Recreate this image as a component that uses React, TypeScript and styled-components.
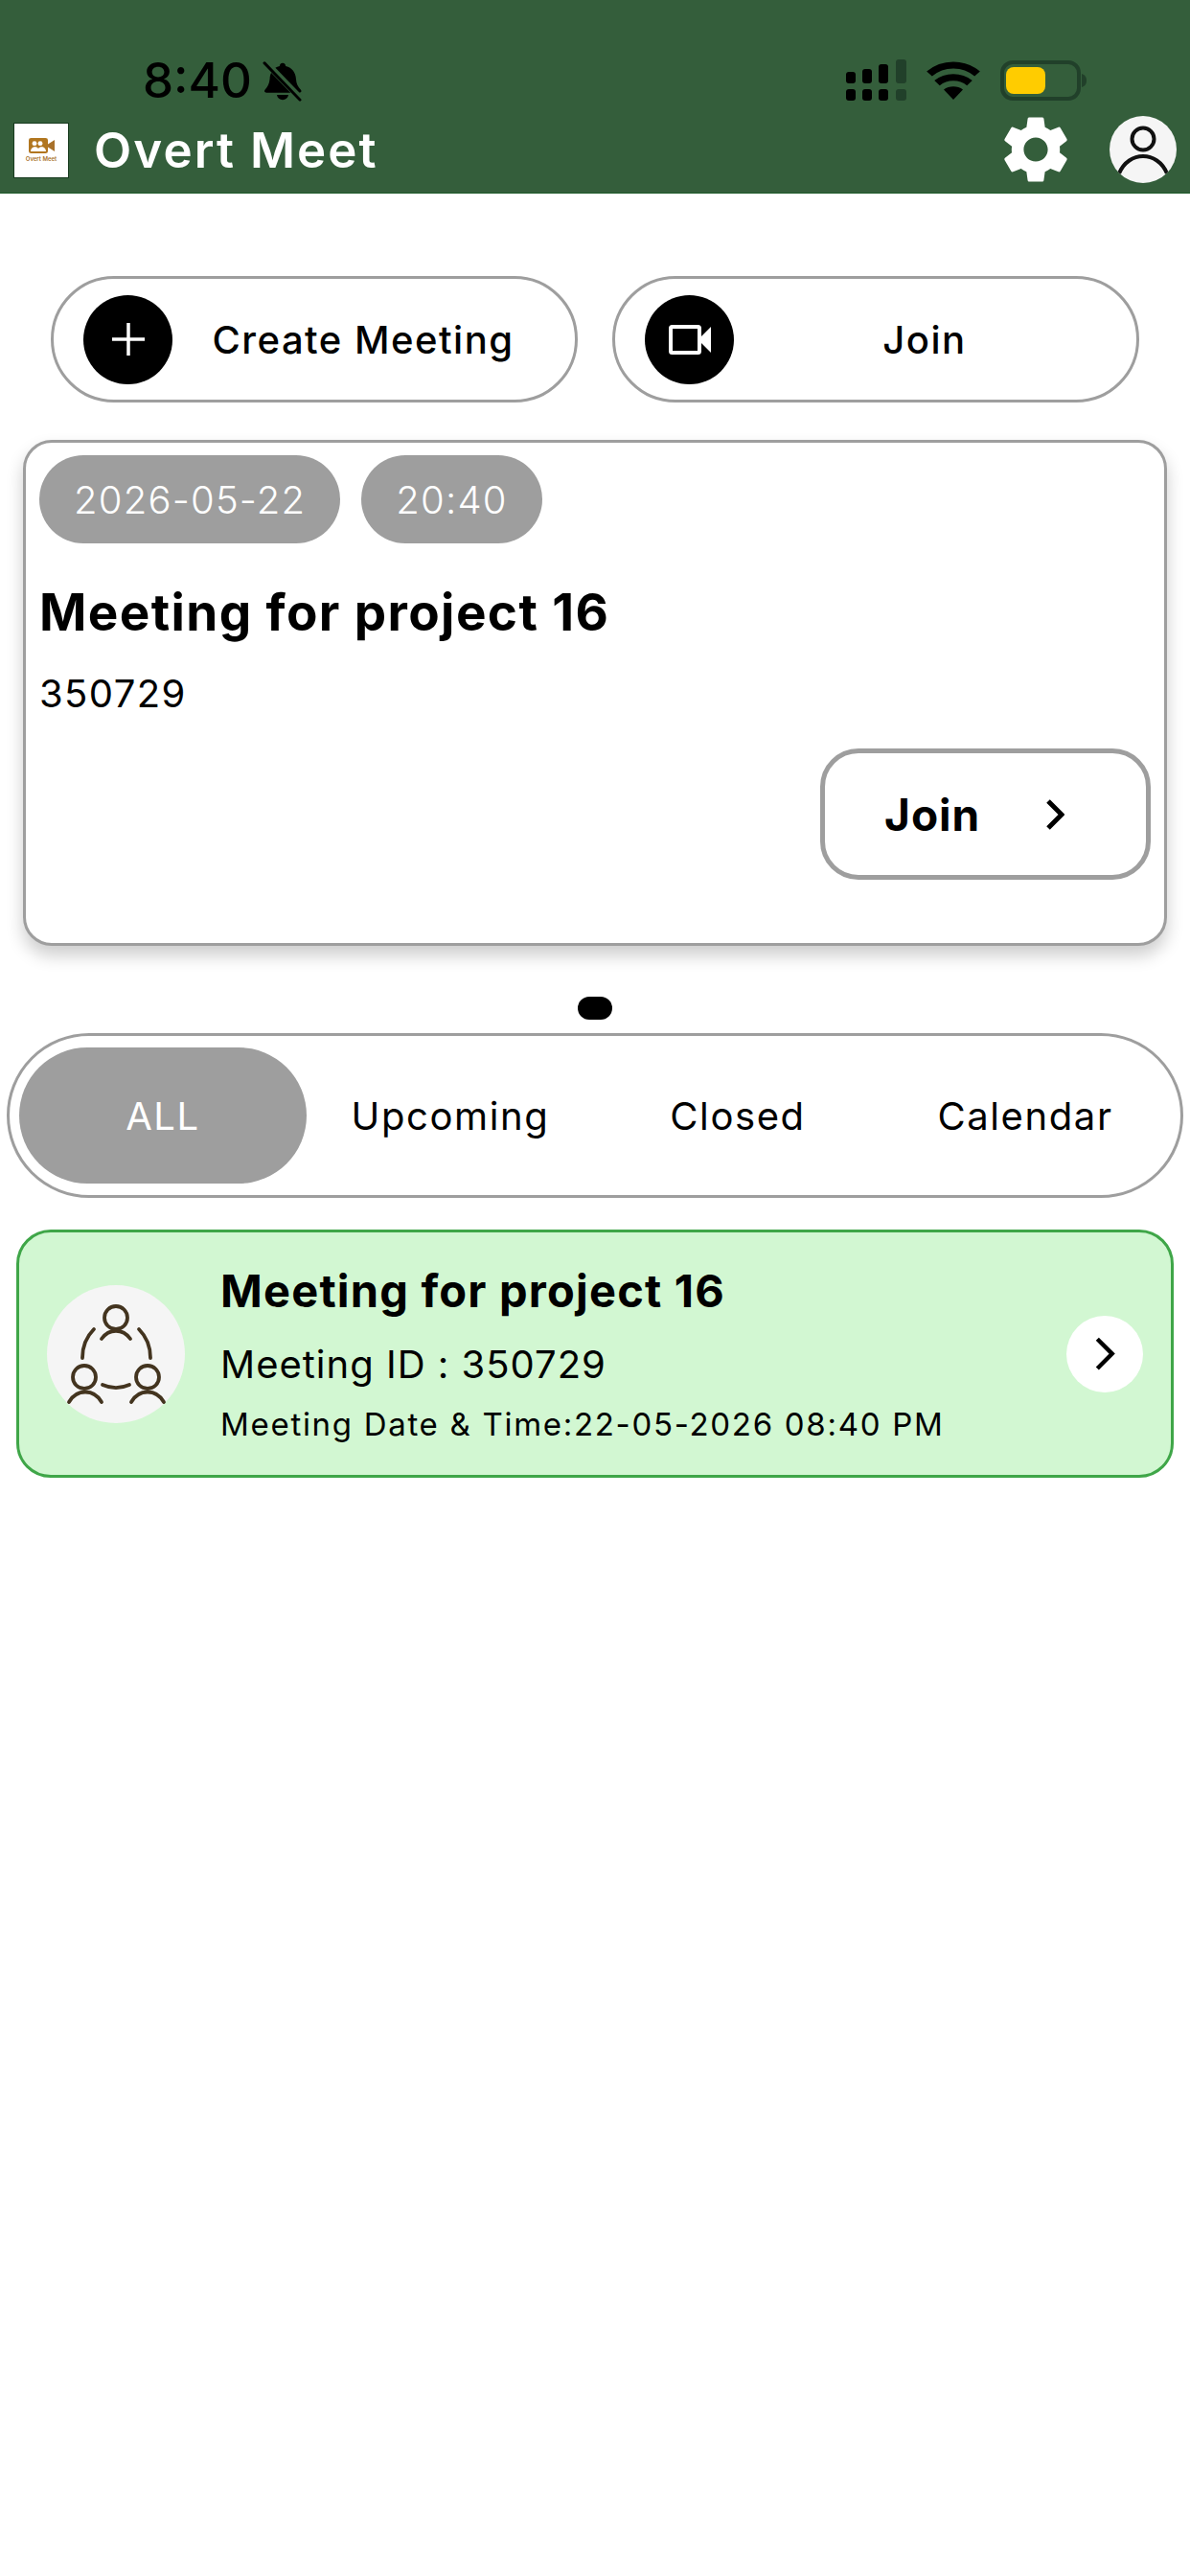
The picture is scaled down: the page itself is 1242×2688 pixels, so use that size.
import styled, { createGlobalStyle } from "styled-components";

const GlobalStyle = createGlobalStyle`
  html, body {
    margin: 0;
    padding: 0;
    background: #ffffff;
    font-family: Inter, "Liberation Sans", sans-serif;
  }
  * {
    box-sizing: border-box;
  }
`;

const Page = styled.div`
  width: 1242px;
  height: 2688px;
  background: #ffffff;
  overflow: hidden;
  display: flex;
  flex-direction: column;
`;

const Header = styled.header`
  height: 202px;
  background: #345e3b;
  border-bottom: 1px solid #1f5a2a;
  display: flex;
  flex-direction: column;
`;

const StatusBar = styled.div`
  height: 112px;
  padding: 59px 108px 0 149px;
  display: flex;
  align-items: flex-start;
  justify-content: space-between;
`;

const StatusLeft = styled.div`
  display: flex;
  align-items: center;
  gap: 11px;
`;

const Time = styled.span`
  font-size: 51px;
  line-height: 50px;
  font-weight: 500;
  color: #000000;
`;

const StatusRight = styled.div`
  display: flex;
  align-items: center;
  gap: 21px;
  margin-top: 3px;
`;

const AppBar = styled.div`
  flex: 1;
  display: flex;
  align-items: center;
  padding: 0 14px;
`;

const LogoBox = styled.div`
  width: 58px;
  height: 58px;
  margin: 0 26px 0 0;
  background: #ffffff;
  border: 1px solid #173a1e;
  display: flex;
  flex-direction: column;
  align-items: center;
  justify-content: center;
  gap: 2px;
`;

const LogoText = styled.span`
  font-size: 6px;
  line-height: 7px;
  font-weight: 600;
  color: #a8712a;
  white-space: nowrap;
`;

const AppTitle = styled.h1`
  flex: 1;
  margin: 0;
  font-size: 51px;
  line-height: 60px;
  font-weight: 600;
  letter-spacing: 2.1px;
  color: #ffffff;
`;

const BarIcons = styled.div`
  display: flex;
  align-items: center;
  gap: 41px;
  margin-bottom: 2px;
`;

const Avatar = styled.div`
  width: 70px;
  height: 70px;
  border-radius: 50%;
  background: #f5f5f5;
  overflow: hidden;
`;

const Actions = styled.div`
  display: flex;
  gap: 36px;
  padding: 86px 0 0 53px;
`;

const ActionButton = styled.button`
  width: 550px;
  height: 132px;
  padding: 0 0 0 31px;
  border: 3px solid #9e9e9e;
  border-radius: 66px;
  background: #ffffff;
  display: flex;
  align-items: center;
  font-family: inherit;
`;

const ActionCircle = styled.span`
  width: 93px;
  height: 93px;
  flex: none;
  border-radius: 50%;
  background: #000000;
  display: flex;
  align-items: center;
  justify-content: center;
`;

const ActionLabel = styled.span`
  flex: 1;
  padding-right: 22px;
  text-align: center;
  font-size: 40px;
  font-weight: 500;
  letter-spacing: 1.5px;
  color: #000000;
`;

const Card = styled.section`
  height: 528px;
  margin: 39px 24px 0;
  padding: 13px 14px 0;
  border: 3px solid #9e9e9e;
  border-radius: 30px;
  background: #ffffff;
  box-shadow: 0 10px 18px rgba(0, 0, 0, 0.2);
  display: flex;
  flex-direction: column;
`;

const ChipRow = styled.div`
  display: flex;
  gap: 22px;
`;

const Chip = styled.span`
  height: 92px;
  padding: 0 36px;
  border-radius: 46px;
  background: #9e9e9e;
  display: flex;
  align-items: center;
  font-size: 40px;
  font-weight: 300;
  letter-spacing: 1.2px;
  color: #ffffff;
`;

const CardTitle = styled.h2`
  margin: 41px 0 0;
  font-size: 53px;
  line-height: 62px;
  font-weight: 700;
  letter-spacing: 1.4px;
  color: #000000;
`;

const CardCode = styled.p`
  margin: 30px 0 0;
  font-size: 40px;
  line-height: 48px;
  letter-spacing: 1.4px;
  color: #000000;
`;

const JoinButton = styled.button`
  align-self: flex-end;
  width: 345px;
  height: 137px;
  margin: 33px 0 0;
  padding: 0 85px 0 62px;
  border: 5px solid #9e9e9e;
  border-radius: 40px;
  background: #ffffff;
  display: flex;
  align-items: center;
  justify-content: space-between;
  font-family: inherit;
  font-size: 46px;
  font-weight: 700;
  letter-spacing: 1px;
  color: #000000;
`;

const PagerDot = styled.div`
  width: 36px;
  height: 24px;
  margin: 53px auto 14px;
  border-radius: 12px;
  background: #000000;
`;

const Tabs = styled.nav`
  width: 1228px;
  height: 172px;
  margin: 0 0 0 7px;
  padding: 12px 10px;
  border: 3px solid #9e9e9e;
  border-radius: 86px;
  display: grid;
  grid-template-columns: repeat(4, 300px);
`;

const Tab = styled.span<{ $active?: boolean }>`
  border-radius: 71px;
  background: ${({ $active }) => ($active ? "#9e9e9e" : "transparent")};
  color: ${({ $active }) => ($active ? "#ffffff" : "#000000")};
  display: flex;
  align-items: center;
  justify-content: center;
  font-size: 40px;
  font-weight: 400;
  letter-spacing: 1.6px;
`;

const MeetingRow = styled.article`
  width: 1208px;
  height: 259px;
  margin: 33px 0 0 17px;
  padding: 0 29px;
  border: 3px solid #3fa648;
  border-radius: 36px;
  background: #d2f7d2;
  display: flex;
  align-items: center;
`;

const GroupCircle = styled.div`
  width: 144px;
  height: 144px;
  flex: none;
  margin: 0 37px 0 0;
  border-radius: 50%;
  background: #f5f5f5;
`;

const MeetingText = styled.div`
  flex: 1;
  display: flex;
  flex-direction: column;
`;

const MeetingTitle = styled.h3`
  margin: 0;
  font-size: 47px;
  line-height: 56px;
  font-weight: 700;
  letter-spacing: 1.2px;
  color: #000000;
`;

const MeetingId = styled.p`
  margin: 25px 0 0;
  font-size: 40px;
  line-height: 48px;
  letter-spacing: 1px;
  color: #000000;
`;

const MeetingDate = styled.p`
  margin: 18px 0 0;
  font-size: 33px;
  line-height: 40px;
  letter-spacing: 1.7px;
  color: #000000;
`;

const NextCircle = styled.div`
  width: 80px;
  height: 80px;
  flex: none;
  border-radius: 50%;
  background: #ffffff;
  display: flex;
  align-items: center;
  justify-content: center;
`;

const BellOff = () => (
  <svg width="42" height="43" viewBox="0 0 42 46" preserveAspectRatio="none">
    <path
      d="M21 3c2 0 3 1.500 3.200 3.400C31 8 34.500 13.500 35 21c.3 5 1.800 8 5 12 1 1.500.5 3-1.500 3H4c-2 0-2.500-1.500-1.500-3 3-4 4.500-7 5-12C8 13.500 11 8 17.800 6.400 18 4.500 19 3 21 3z"
      fill="#000"
    />
    <path d="M15 38.500h12c-.5 3.500-3 5.500-6 5.500s-5.500-2-6-5.500z" fill="#000" />
    <path d="M3 2 41 44" stroke="#345e3b" strokeWidth="7" />
    <path d="M2 3 39 44" stroke="#000" strokeWidth="3" strokeLinecap="round" />
  </svg>
);

const SignalIcon = () => (
  <svg width="63" height="43" viewBox="0 0 63 43">
    <g fill="#000">
      <rect x="0" y="13" width="10" height="12" rx="3" />
      <rect x="17" y="10" width="10" height="15" rx="3" />
      <rect x="34" y="5" width="10" height="20" rx="3" />
      <rect x="0" y="31" width="10" height="12" rx="3" />
      <rect x="17" y="31" width="10" height="12" rx="3" />
      <rect x="34" y="31" width="10" height="12" rx="3" />
    </g>
    <g fill="#21402a">
      <rect x="52" y="0" width="11" height="25" rx="3" />
      <rect x="52" y="31" width="11" height="12" rx="3" />
    </g>
  </svg>
);

const WifiIcon = () => (
  <svg width="56" height="40" viewBox="0 0 56 46" preserveAspectRatio="none">
    <path d="M28 46 18 34c5.500-5 14.500-5 20 0z" fill="#000" />
    <path d="M11 26c9.500-9 24.500-9 34 0" fill="none" stroke="#000" strokeWidth="8" />
    <path d="M3 15C17 1 39 1 53 15" fill="none" stroke="#000" strokeWidth="8" />
  </svg>
);

const BatteryIcon = () => (
  <svg width="90" height="42" viewBox="0 0 90 42">
    <rect x="2" y="2" width="80" height="38" rx="11" fill="none" stroke="#21402a" strokeWidth="4" />
    <rect x="6" y="7" width="41" height="28" rx="8" fill="#ffcc00" />
    <path d="M85 14c3 1 5 3 5 7s-2 6-5 7z" fill="#21402a" />
  </svg>
);

const LogoMark = () => (
  <svg width="27" height="16" viewBox="0 0 27 17" preserveAspectRatio="none">
    <rect x="0" y="0" width="20" height="17" rx="2.500" fill="#b1761f" />
    <path d="M20 7l7-5v13l-7-5z" fill="#a8712a" />
    <circle cx="6" cy="6" r="2.500" fill="#fff" />
    <circle cx="12" cy="6" r="2.500" fill="#fff" />
    <path d="M2 15c0-7 9-7 9 0zM9 15c0-7 9-7 9 0z" fill="#fff" />
  </svg>
);

const GearIcon = () => (
  <svg width="72" height="70" viewBox="2.500 2 19 20">
    <path
      fill="#fff"
      d="M19.140 12.940c.04-.3.06-.61.06-.94 0-.32-.02-.64-.07-.94l2.030-1.580c.18-.14.23-.41.12-.61l-1.920-3.320c-.12-.22-.37-.29-.59-.22l-2.390.96c-.5-.38-1.030-.7-1.620-.94l-.36-2.540c-.04-.24-.24-.41-.48-.41h-3.840c-.24 0-.43.17-.47.41l-.36 2.540c-.59.24-1.130.57-1.620.94l-2.390-.96c-.22-.08-.47 0-.59.22L2.740 8.870c-.12.21-.08.47.12.61l2.030 1.580c-.05.3-.09.63-.09.94s.02.64.07.94l-2.030 1.580c-.18.14-.23.41-.12.61l1.920 3.320c.12.22.37.29.59.22l2.390-.96c.5.38 1.030.7 1.620.94l.36 2.540c.05.24.24.41.48.41h3.840c.24 0 .44-.17.47-.41l.36-2.540c.59-.24 1.130-.56 1.620-.94l2.390.96c.22.08.47 0 .59-.22l1.920-3.320c.12-.22.07-.47-.12-.61l-2.010-1.580zM12 15.600c-1.980 0-3.600-1.620-3.600-3.600s1.620-3.600 3.600-3.600 3.600 1.620 3.600 3.600-1.620 3.600-3.600 3.600z"
    />
  </svg>
);

const AvatarIcon = () => (
  <svg width="70" height="70" viewBox="0 0 70 70">
    <circle cx="35" cy="24" r="11.500" fill="none" stroke="#111" strokeWidth="4" />
    <path d="M10 60c5-12 15-18 25-18s20 6 25 18" fill="none" stroke="#111" strokeWidth="4" />
  </svg>
);

const PlusIcon = () => (
  <svg width="34" height="34" viewBox="0 0 34 34">
    <path d="M17 0v34M0 17h34" stroke="#fff" strokeWidth="3.500" />
  </svg>
);

const VideoIcon = () => (
  <svg width="44" height="31" viewBox="0 0 44 31">
    <rect x="2" y="2" width="30" height="27" rx="1.500" fill="none" stroke="#fff" strokeWidth="4" />
    <path d="M34 12 44 2v27L34 19z" fill="#fff" />
  </svg>
);

const Chevron = ({ size, weight }: { size: number; weight: number }) => (
  <svg width={size} height={size * 1.6} viewBox="0 0 20 32">
    <path d="M3 2l14 14L3 30" fill="none" stroke="#000" strokeWidth={weight} />
  </svg>
);

const GroupIcon = () => (
  <svg width="144" height="144" viewBox="0 0 144 144">
    <g fill="none" stroke="#43341f" strokeWidth="3.800" strokeLinecap="round">
      <circle cx="72" cy="34" r="12" />
      <path d="M57 56c8-11 22-11 30 0" />
      <path d="M37 76c0-12 4-22 12-30" />
      <path d="M96 46c8 8 12 18 12 30" />
      <circle cx="39" cy="96" r="12" />
      <path d="M23 122c8-14 26-14 34 0" />
      <circle cx="105" cy="96" r="12" />
      <path d="M88 122c8-14 26-14 34 0" />
      <path d="M58 104c9 4 19 4 28 0" />
    </g>
  </svg>
);

const tabs = ["ALL", "Upcoming", "Closed", "Calendar"];

const App = () => {
  return (
    <Page>
      <GlobalStyle />
      <Header>
        <StatusBar>
          <StatusLeft>
            <Time>8:40</Time>
            <BellOff />
          </StatusLeft>
          <StatusRight>
            <SignalIcon />
            <WifiIcon />
            <BatteryIcon />
          </StatusRight>
        </StatusBar>
        <AppBar>
          <LogoBox>
            <LogoMark />
            <LogoText>Overt Meet</LogoText>
          </LogoBox>
          <AppTitle>Overt Meet</AppTitle>
          <BarIcons>
            <GearIcon />
            <Avatar>
              <AvatarIcon />
            </Avatar>
          </BarIcons>
        </AppBar>
      </Header>

      <Actions>
        <ActionButton>
          <ActionCircle>
            <PlusIcon />
          </ActionCircle>
          <ActionLabel>Create Meeting</ActionLabel>
        </ActionButton>
        <ActionButton>
          <ActionCircle>
            <VideoIcon />
          </ActionCircle>
          <ActionLabel>Join</ActionLabel>
        </ActionButton>
      </Actions>

      <Card>
        <ChipRow>
          <Chip>2026-05-22</Chip>
          <Chip>20:40</Chip>
        </ChipRow>
        <CardTitle>Meeting for project 16</CardTitle>
        <CardCode>350729</CardCode>
        <JoinButton>
          Join
          <Chevron size={20} weight={5} />
        </JoinButton>
      </Card>

      <PagerDot />

      <Tabs>
        {tabs.map((tab) => (
          <Tab key={tab} $active={tab === "ALL"}>
            {tab}
          </Tab>
        ))}
      </Tabs>

      <MeetingRow>
        <GroupCircle>
          <GroupIcon />
        </GroupCircle>
        <MeetingText>
          <MeetingTitle>Meeting for project 16</MeetingTitle>
          <MeetingId>Meeting ID : 350729</MeetingId>
          <MeetingDate>Meeting Date &amp; Time:22-05-2026 08:40 PM</MeetingDate>
        </MeetingText>
        <NextCircle>
          <Chevron size={22} weight={4} />
        </NextCircle>
      </MeetingRow>
    </Page>
  );
};

export default App;
